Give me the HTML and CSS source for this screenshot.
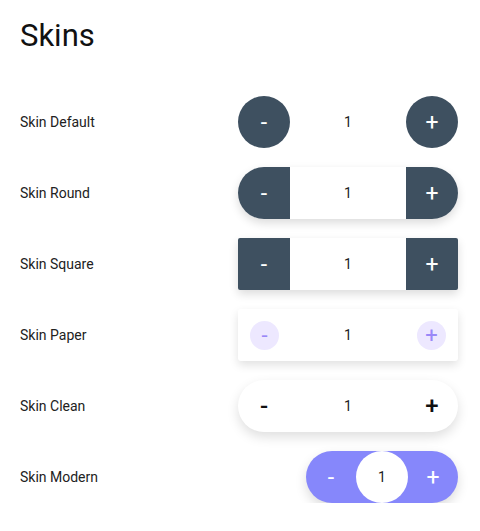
FILE: index.html
```html
<!DOCTYPE html>
<html>
<head>
<meta charset="utf-8">
<link rel="stylesheet" href="styles.css">
</head>
<body>
<h1 class="title">Skins</h1>
<div class="list">
  <div class="row">
    <span class="label">Skin Default</span>
    <div class="stepper skin-default">
      <span class="btn">-</span><span class="value">1</span><span class="btn">+</span>
    </div>
  </div>
  <div class="row">
    <span class="label">Skin Round</span>
    <div class="stepper skin-round">
      <span class="btn">-</span><span class="value">1</span><span class="btn">+</span>
    </div>
  </div>
  <div class="row">
    <span class="label">Skin Square</span>
    <div class="stepper skin-square">
      <span class="btn">-</span><span class="value">1</span><span class="btn">+</span>
    </div>
  </div>
  <div class="row">
    <span class="label">Skin Paper</span>
    <div class="stepper skin-paper">
      <span class="btn">-</span><span class="value">1</span><span class="btn">+</span>
    </div>
  </div>
  <div class="row">
    <span class="label">Skin Clean</span>
    <div class="stepper skin-clean">
      <span class="btn">-</span><span class="value">1</span><span class="btn">+</span>
    </div>
  </div>
  <div class="row">
    <span class="label">Skin Modern</span>
    <div class="stepper skin-modern">
      <span class="btn">-</span><span class="value">1</span><span class="btn">+</span>
    </div>
  </div>
</div>
</body>
</html>
```
FILE: styles.css
```css
* { box-sizing: border-box; }
html, body { margin: 0; background: #fff; }
body {
  font-family: Roboto, "Noto Sans", sans-serif;
  color: #222;
  padding: 0 22px 0 20px;
}
.title {
  margin: 0;
  padding-top: 16px;
  font-size: 31px;
  font-weight: 400;
  line-height: 40px;
  color: #111;
}
.list {
  margin-top: 40px;
  display: flex;
  flex-direction: column;
  gap: 19px;
}
.row {
  display: flex;
  align-items: center;
  justify-content: space-between;
  height: 52px;
}
.label {
  font-size: 14px;
  color: #222;
}
.stepper {
  display: flex;
  align-items: center;
  width: 220px;
  height: 52px;
}
.stepper .btn {
  flex: none;
  display: flex;
  align-items: center;
  justify-content: center;
  width: 52px;
  height: 52px;
  font-size: 23px;
  font-weight: 400;
  color: #fff;
  background: #3e5060;
}
.stepper .value {
  flex: 1;
  height: 100%;
  display: flex;
  align-items: center;
  justify-content: center;
  font-size: 14px;
  color: #222;
  background: #fff;
}
.skin-default .btn { border-radius: 50%; }
.skin-default .value { background: transparent; }
.skin-round {
  border-radius: 26px;
  overflow: hidden;
  box-shadow: 0 4px 10px rgba(0,0,0,0.14);
}
.skin-square {
  border-radius: 2px;
  overflow: hidden;
  box-shadow: 0 4px 10px rgba(0,0,0,0.14);
}
.skin-paper {
  background: #fff;
  border-radius: 3px;
  padding: 0 12px;
  box-shadow: 0 4px 10px rgba(0,0,0,0.12);
}
.skin-paper .btn {
  width: 29px;
  height: 29px;
  border-radius: 50%;
  background: #ede8ff;
  color: #9a88f8;
  font-size: 22px;
}
.skin-clean {
  background: #fff;
  border-radius: 26px;
  box-shadow: 0 5px 12px rgba(0,0,0,0.13);
}
.skin-clean .btn {
  background: transparent;
  color: #111;
  font-size: 24px;
  font-weight: 500;
}
.skin-clean .value { background: transparent; }
.skin-modern {
  width: 152px;
  background: #8687fb;
  border-radius: 26px;
  box-shadow: 0 5px 12px rgba(0,0,0,0.14);
}
.skin-modern .btn {
  background: transparent;
  width: 50px;
}
.skin-modern .value {
  flex: none;
  width: 52px;
  height: 52px;
  border-radius: 50%;
  background: #fff;
}
```
